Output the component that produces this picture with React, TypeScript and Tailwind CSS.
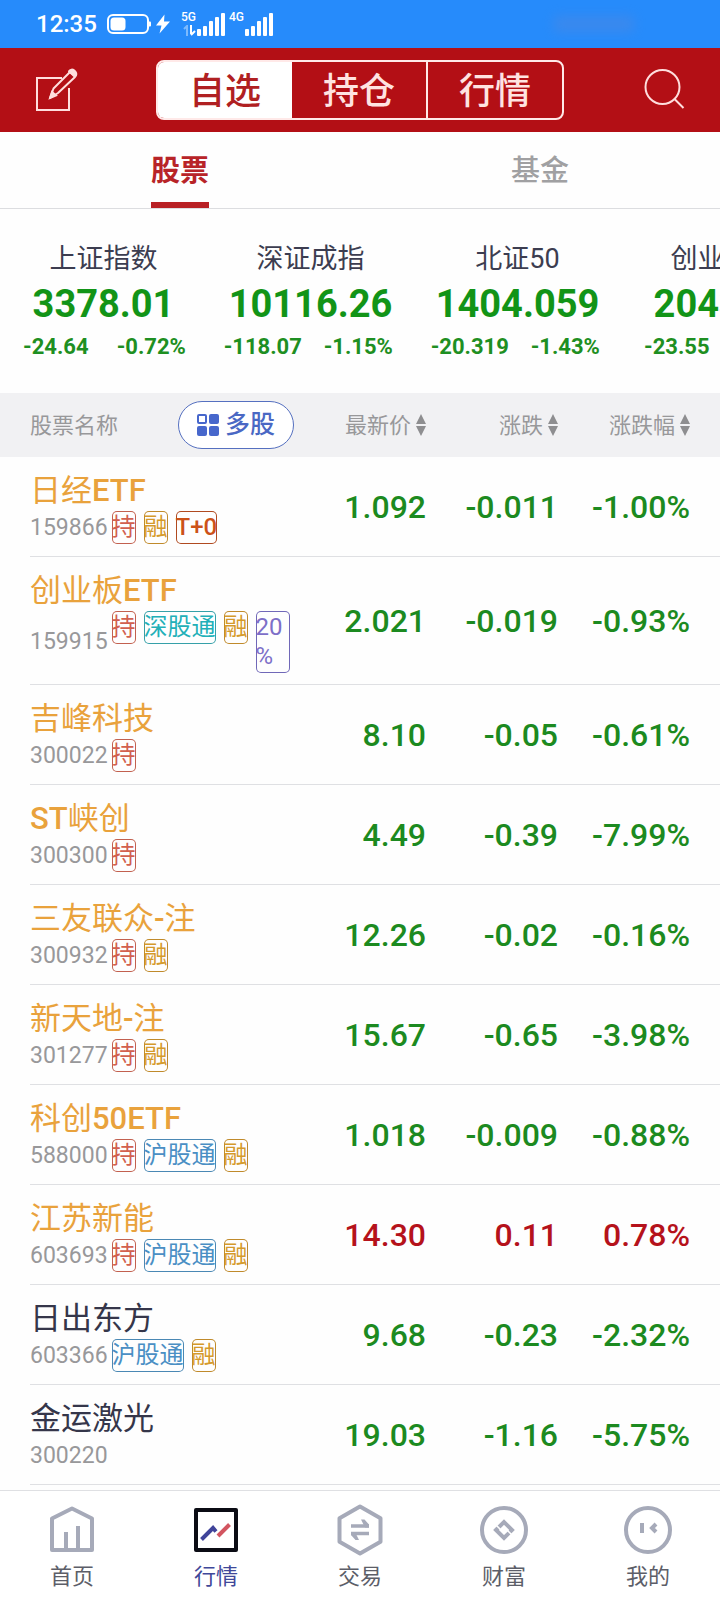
import type { ReactNode } from "react";

const indices = [
  { name: "上证指数", value: "3378.01", change: "-24.64", pct: "-0.72%" },
  { name: "深证成指", value: "10116.26", change: "-118.07", pct: "-1.15%" },
  { name: "北证50", value: "1404.059", change: "-20.319", pct: "-1.43%" },
  { name: "创业板指", value: "2043.82", change: "-23.55", pct: "-1.14%" },
];

const tagColors: Record<string, string> = {
  持: "text-[#d2604f] ring-[#c2604f]",
  融: "text-[#d59a2b] ring-[#c08a2b]",
  "T+0": "font-medium text-[#cc5218] ring-[#b04a20]",
  深股通: "text-[#22b0b8] ring-[#35a0a8]",
  沪股通: "text-[#4a8fc4] ring-[#4a88b4]",
  "20%": "text-[#7d6fc8] ring-[#7068b8]",
};

type Stock = { name: string; code: string; tags: string[]; price: string; change: string; pct: string; plain?: boolean };

const stocks: Stock[] = [
  { name: "日经ETF", code: "159866", tags: ["持", "融", "T+0"], price: "1.092", change: "-0.011", pct: "-1.00%" },
  { name: "创业板ETF", code: "159915", tags: ["持", "深股通", "融", "20%"], price: "2.021", change: "-0.019", pct: "-0.93%" },
  { name: "吉峰科技", code: "300022", tags: ["持"], price: "8.10", change: "-0.05", pct: "-0.61%" },
  { name: "ST峡创", code: "300300", tags: ["持"], price: "4.49", change: "-0.39", pct: "-7.99%" },
  { name: "三友联众-注", code: "300932", tags: ["持", "融"], price: "12.26", change: "-0.02", pct: "-0.16%" },
  { name: "新天地-注", code: "301277", tags: ["持", "融"], price: "15.67", change: "-0.65", pct: "-3.98%" },
  { name: "科创50ETF", code: "588000", tags: ["持", "沪股通", "融"], price: "1.018", change: "-0.009", pct: "-0.88%" },
  { name: "江苏新能", code: "603693", tags: ["持", "沪股通", "融"], price: "14.30", change: "0.11", pct: "0.78%" },
  { name: "日出东方", code: "603366", tags: ["沪股通", "融"], price: "9.68", change: "-0.23", pct: "-2.32%", plain: true },
  { name: "金运激光", code: "300220", tags: [], price: "19.03", change: "-1.16", pct: "-5.75%", plain: true },
];

function Bars() {
  return (
    <svg width="28" height="24" viewBox="0 0 28 24" fill="#fff" aria-hidden="true">
      <rect x="0" y="17" width="4" height="7" rx="1" />
      <rect x="6" y="14" width="4" height="10" rx="1" />
      <rect x="12" y="9" width="4" height="15" rx="1" />
      <rect x="18" y="5" width="4" height="19" rx="1" />
      <rect x="24" y="1" width="4" height="23" rx="1" />
    </svg>
  );
}

function StatusBar() {
  return (
    <div className="flex h-12 items-center bg-[#268bfb] pl-9 text-white">
      <span className="text-2xl leading-none font-medium">12:35</span>
      <svg className="ml-2.5" width="44" height="20" viewBox="0 0 44 20" fill="none" aria-hidden="true">
        <rect x="1" y="1" width="40" height="18" rx="5" stroke="#fff" strokeWidth="2" />
        <rect x="3.500" y="3.500" width="15" height="13" rx="3.500" fill="#fff" />
        <path d="M42 7.500h1a1 1 0 0 1 1 1v3a1 1 0 0 1-1 1h-1z" fill="#fff" />
      </svg>
      <svg className="ml-1" width="16" height="20" viewBox="0 0 16 20" fill="#fff" aria-hidden="true">
        <path d="M9.500.5 1 11.500h5.500L4.500 19.500 15 7.500H9z" />
      </svg>
      <div className="ml-2.5 flex h-6 w-4 flex-col justify-between">
        <span className="text-xs leading-[10px] font-medium">5G</span>
        <svg className="self-end" width="14" height="11" viewBox="0 0 14 11" fill="none" strokeWidth="2" aria-hidden="true">
          <path d="M1 4l3-3v10" stroke="#7dbafd" />
          <path d="M8 0v9M8 10l4-4" stroke="#fff" />
        </svg>
      </div>
      <Bars />
      <span className="ml-1 h-6 w-4 text-xs leading-[10px] font-medium">4G</span>
      <Bars />
      <span className="mr-[86px] ml-auto h-4 w-20 bg-[#5a86d8] opacity-40 blur-[6px]" />
    </div>
  );
}

function Header() {
  return (
    <header className="flex h-21 items-center justify-between bg-[#b30f15] px-[35px]">
      <button type="button" aria-label="编辑">
        <svg width="44" height="44" viewBox="0 0 44 44" fill="none" stroke="#ffdedd" strokeWidth="2" aria-hidden="true">
          <path d="M27 10H2v32h32V20" />
          <path d="M15 30l3.500-9.500L35 4l5 5-17 16z" strokeLinejoin="round" />
          <path d="M34.500 3.500q2-2.500 4.500-.5t1.500 4.500z" fill="#ffdedd" strokeWidth="3" strokeLinejoin="round" />
          <path d="M15 30l2-6 4 3.500z" fill="#ffdedd" />
        </svg>
      </button>
      <nav className="flex h-15 w-[408px] overflow-hidden rounded-lg border-2 border-[#ffe9e8] pt-0 text-4xl font-medium">
        <button type="button" className="flex-1 bg-white pt-1 text-[#b02022]">自选</button>
        <button type="button" className="flex-1 pt-1 text-[#ffe3e1]">持仓</button>
        <button type="button" className="flex-1 border-l-2 border-[#ffe9e8] pt-1 text-[#ffe3e1]">行情</button>
      </nav>
      <button type="button" aria-label="搜索">
        <svg width="44" height="42" viewBox="0 0 44 42" fill="none" stroke="#ffdedd" strokeWidth="2" aria-hidden="true">
          <circle cx="21.500" cy="18" r="17" />
          <path d="M33 29.500l9.500 9.500" />
        </svg>
      </button>
    </header>
  );
}

function Tabs() {
  return (
    <div className="grid h-[77px] grid-cols-2 border-b border-[#dcdde0] text-[29px]">
      <button type="button" className="flex justify-center">
        <span className="flex h-full items-center border-b-6 border-[#b82024] pt-2.5 font-bold text-[#b82428]">股票</span>
      </button>
      <button type="button" className="flex justify-center">
        <span className="flex h-full items-center border-b-6 border-transparent pt-2.5 font-medium text-[#a0a0a2]">基金</span>
      </button>
    </div>
  );
}

function IndexStrip() {
  return (
    <div className="flex h-46 overflow-hidden pt-[30px]">
      {indices.map((item) => (
        <div key={item.name} className="w-[207px] shrink-0 px-2 text-center">
          <div className="text-[27px] leading-10 text-[#3c3d50]">{item.name}</div>
          <div className="text-[38px] leading-[50px] font-bold text-[#129417]">{item.value}</div>
          <div className="grid grid-cols-2 text-[22px] leading-9 font-bold whitespace-nowrap text-[#1e8f22]">
            <span>{item.change}</span>
            <span>{item.pct}</span>
          </div>
        </div>
      ))}
    </div>
  );
}

function SortHeader({ label }: { label: string }) {
  return (
    <th scope="col" className="bg-[#f1f1f3] p-0 text-right font-normal">
      <button type="button" className="inline-flex items-center gap-[5px]">
        {label}
        <svg width="10" height="22" viewBox="0 0 10 22" fill="#8e8e90" aria-hidden="true">
          <path d="M5 0l5 10H0zM5 22L0 12h10z" />
        </svg>
      </button>
    </th>
  );
}

function StockName({ name }: { name: string }) {
  return (
    <>
      {name.split(/([A-Z0-9-]+)/).map((part, i) =>
        i % 2 === 1 ? (
          <span key={i} className="font-medium">
            {part}
          </span>
        ) : (
          part
        ),
      )}
    </>
  );
}

function Tag({ label }: { label: string }) {
  const narrow = label === "20%";
  return (
    <span
      className={`rounded-[5px] py-0.5 text-2xl leading-[29px] ring-1 ring-inset ${
        narrow ? "w-[34px]" : "whitespace-nowrap"
      } ${tagColors[label]}`}
    >
      {narrow ? (
        <>
          20
          <wbr />%
        </>
      ) : (
        label
      )}
    </span>
  );
}

function StockTable() {
  return (
    <div className="overflow-hidden pl-[30px]">
      <table className="w-full table-fixed border-separate border-spacing-0">
        <colgroup>
          <col />
          <col className="w-[132px]" />
          <col className="w-[132px]" />
          <col className="w-[132px]" />
          <col className="w-[30px]" />
        </colgroup>
        <thead>
          <tr className="h-16 text-[22px] text-[#98989a]">
            <th scope="col" className="bg-[#f1f1f3] p-0 font-normal shadow-[-30px_0_0_#f1f1f3]">
              <div className="flex items-center justify-between">
                股票名称
                <button
                  type="button"
                  className="flex h-12 items-center gap-1.5 rounded-full border border-[#5570c0] bg-white px-[18px] text-[25px] font-medium text-[#4a68c4]"
                >
                  <svg width="22" height="22" viewBox="0 0 22 22" fill="#4767cc" aria-hidden="true">
                    <rect x="1" y="1" width="8" height="8" rx="1" fill="none" stroke="#4767cc" strokeWidth="2" />
                    <rect x="12" width="10" height="10" rx="2" />
                    <rect y="12" width="10" height="10" rx="2" />
                    <rect x="12" y="12" width="10" height="10" rx="2" />
                  </svg>
                  多股
                </button>
              </div>
            </th>
            <SortHeader label="最新价" />
            <SortHeader label="涨跌" />
            <SortHeader label="涨跌幅" />
            <th className="bg-[#f1f1f3] p-0" />
          </tr>
        </thead>
        <tbody>
          {stocks.map((s) => {
            const numeric = `border-b border-[#dfe0e3] p-0 text-right text-[32px] leading-10 font-medium ${
              s.change.startsWith("-") ? "text-[#1c8a20]" : "text-[#b5121b]"
            }`;
            return (
              <tr key={s.code} className="h-25">
                <td className="border-b border-[#dfe0e3] pt-3.5 pr-1 pb-[11px] pl-0 align-top">
                  <div className={`text-[31px] leading-10 ${s.plain ? "text-[#35364a]" : "text-[#e9a23c]"}`}>
                    <StockName name={s.name} />
                  </div>
                  <div className="flex min-h-[33px] items-center gap-1">
                    <span className="text-[23px] leading-8 text-[#98989a]">{s.code}</span>
                    <div className="flex items-start gap-2">
                      {s.tags.map((t) => (
                        <Tag key={t} label={t} />
                      ))}
                    </div>
                  </div>
                </td>
                <td className={numeric}>{s.price}</td>
                <td className={numeric}>{s.change}</td>
                <td className={numeric}>{s.pct}</td>
                <td className="border-b border-[#dfe0e3] p-0" />
              </tr>
            );
          })}
        </tbody>
      </table>
    </div>
  );
}

function NavItem({ label, active, children }: { label: string; active?: boolean; children: ReactNode }) {
  return (
    <a href="#" className={`flex flex-col items-center pt-3 text-[22px] leading-10 ${active ? "text-[#3f4899]" : "text-[#5c5e68]"}`}>
      <svg width="52" height="54" viewBox="0 0 52 54" fill="none" stroke="#a6aab9" strokeWidth="4" aria-hidden="true">
        {children}
      </svg>
      {label}
    </a>
  );
}

function BottomNav() {
  return (
    <nav className="sticky bottom-0 mt-auto grid h-[110px] grid-cols-5 border-t border-[#dfe0e3] bg-white">
      <NavItem label="首页">
        <path d="M6 15.500L26 5.500l20 10V47H6z" strokeLinejoin="round" />
        <path d="M20 29v18M32 23v24" />
      </NavItem>
      <NavItem label="行情" active>
        <rect x="6" y="7" width="40" height="40" stroke="#0b0c14" strokeLinejoin="round" />
        <path d="M11.500 36.500L23 25l3 3.500" stroke="#40449a" />
        <path d="M28 33l11.500-11.500" stroke="#d25560" />
      </NavItem>
      <NavItem label="交易">
        <path d="M26 3.500l20.500 11.700v23.600L26 50.500 5.500 38.800V15.200z" strokeLinejoin="round" />
        <path d="M17 23h18M17 30.500h18" strokeWidth="3.500" />
        <path d="M27 16.500h3.500l4.500 5v3h-4zM25 37h-3.500l-4.500-5v-3h4z" fill="#a6aab9" stroke="none" />
      </NavItem>
      <NavItem label="财富">
        <circle cx="26" cy="27" r="22" />
        <path d="M18 27l8-8 8 8-8 8z" />
        <path d="M17 21l6 6M29 27l6 6" stroke="#fff" strokeWidth="1.500" />
      </NavItem>
      <NavItem label="我的">
        <circle cx="26" cy="27" r="22" />
        <path d="M20 20v10M34 21l-4 4 4 4" />
      </NavItem>
    </nav>
  );
}

export default function App() {
  return (
    <div className="flex min-h-screen flex-col bg-[#fefefe] font-[Roboto,'Noto_Sans_CJK_SC',sans-serif]">
      <StatusBar />
      <Header />
      <Tabs />
      <IndexStrip />
      <StockTable />
      <BottomNav />
    </div>
  );
}
